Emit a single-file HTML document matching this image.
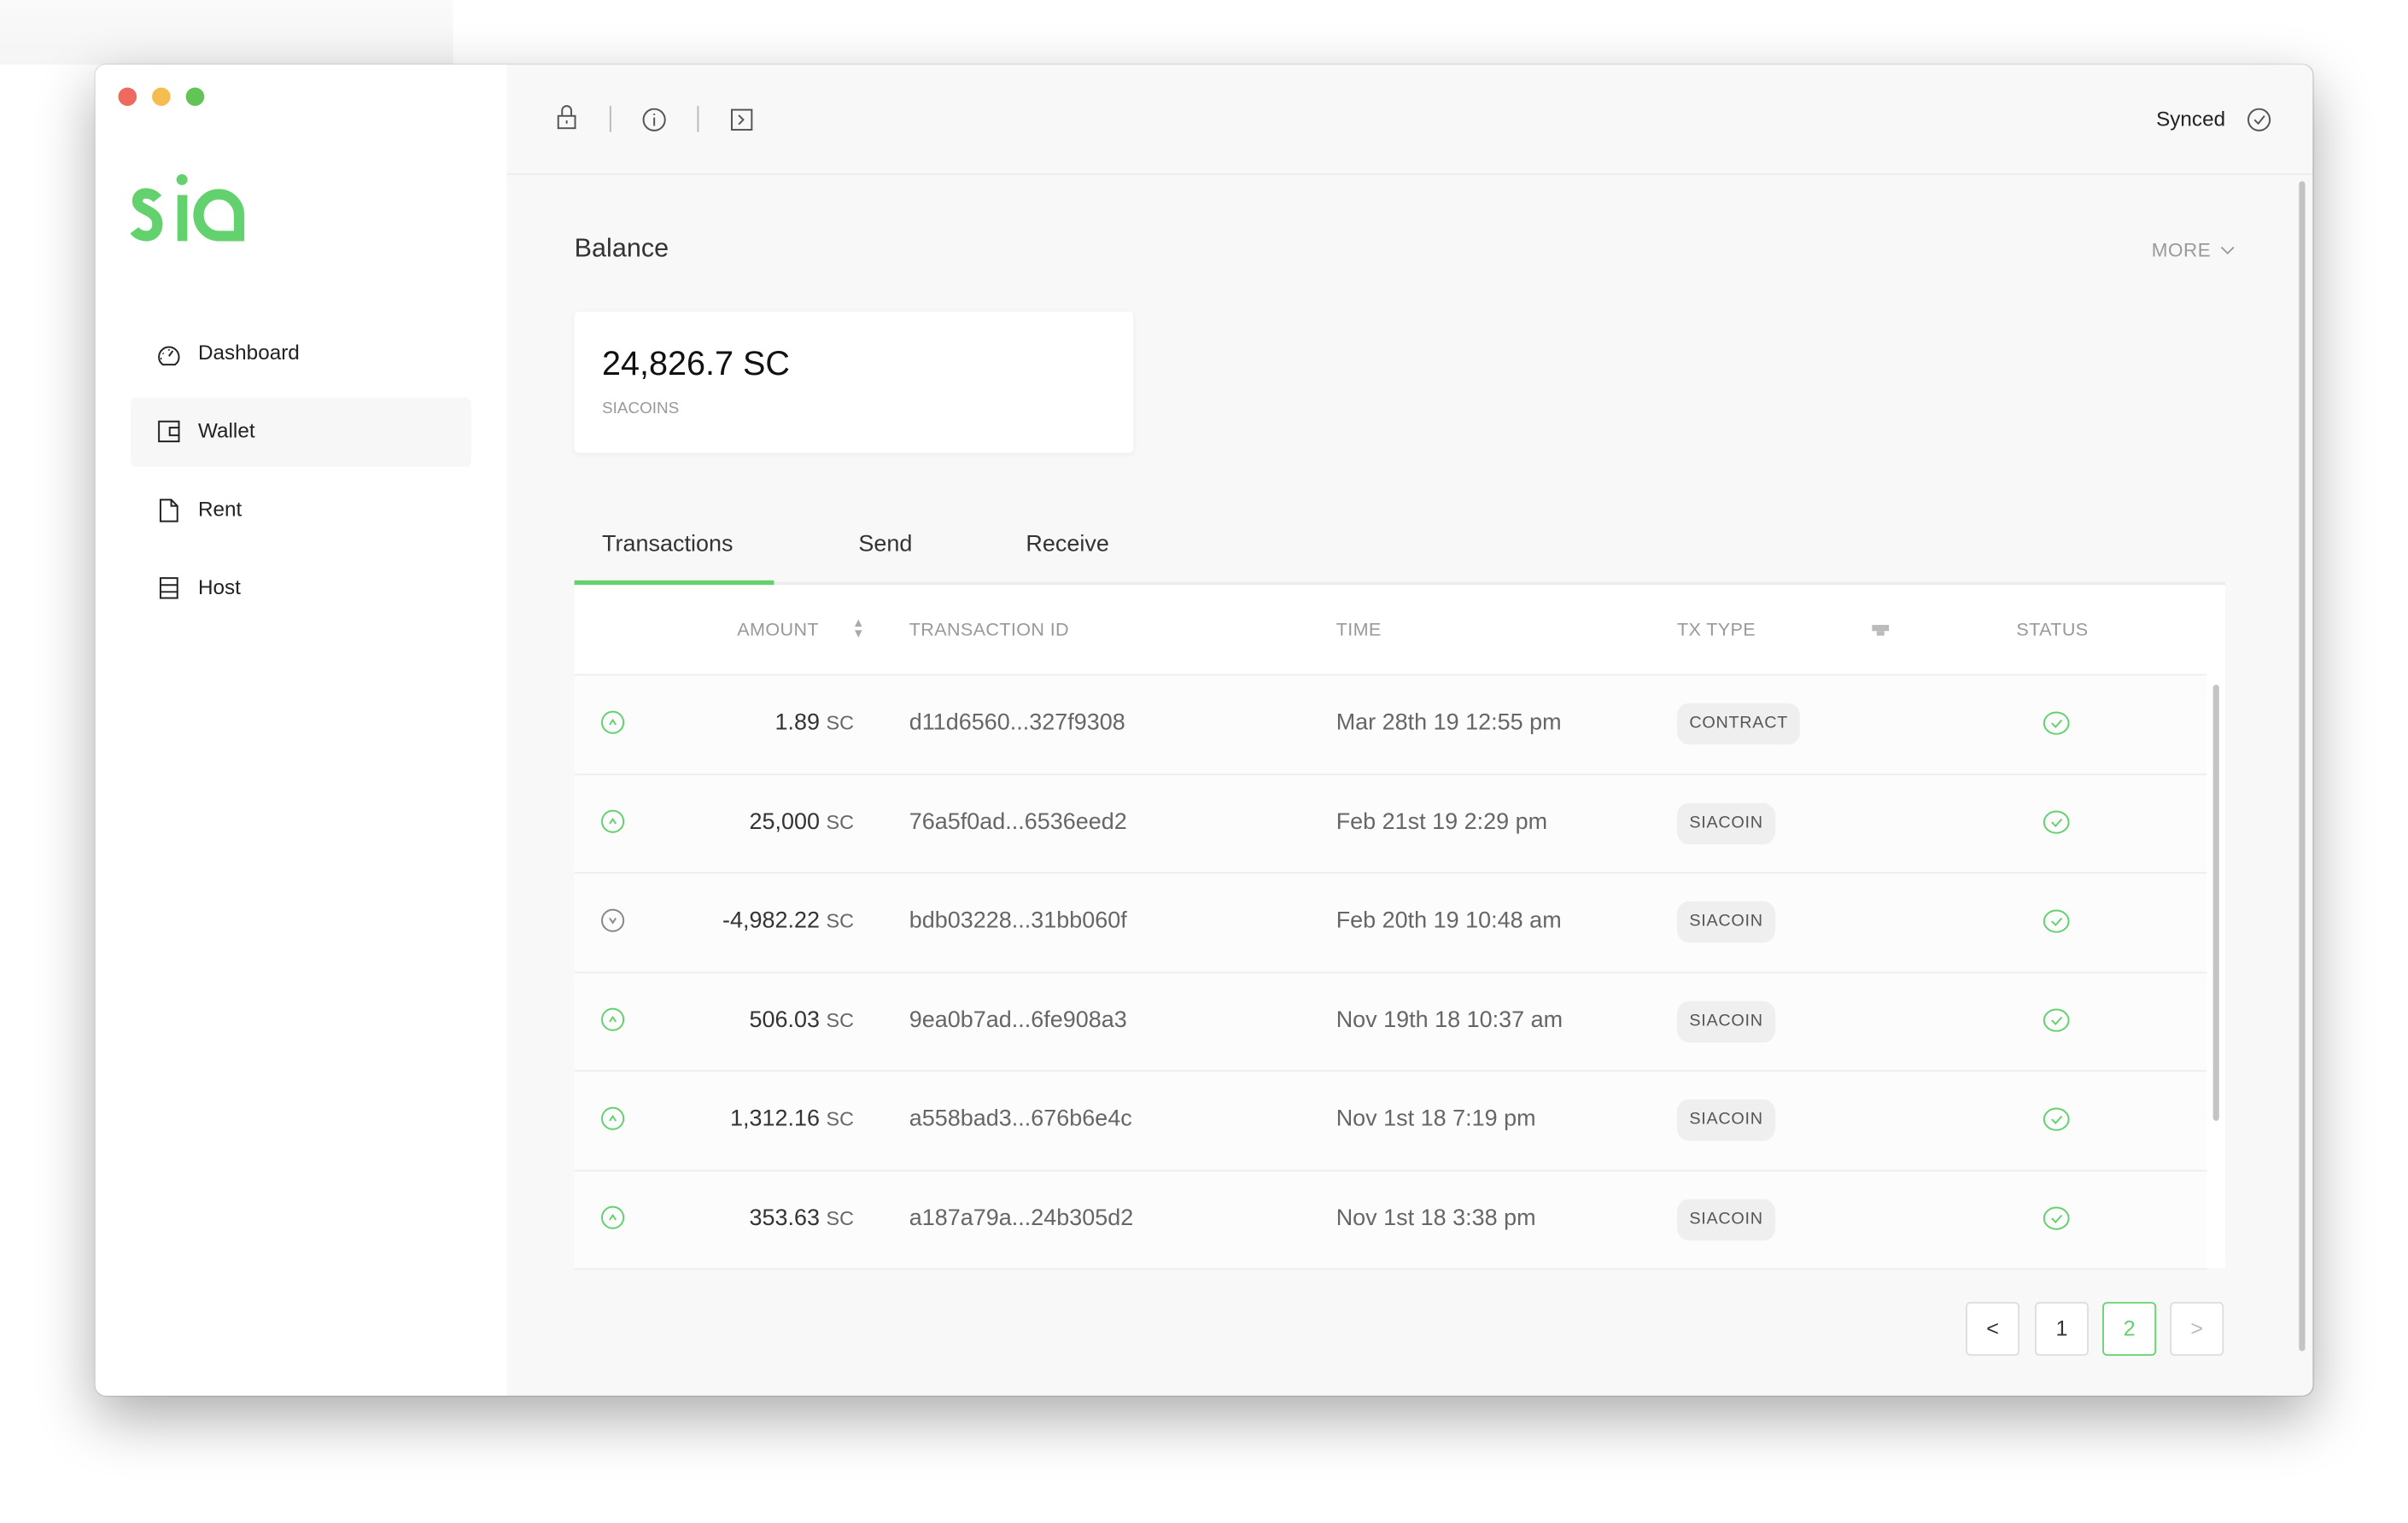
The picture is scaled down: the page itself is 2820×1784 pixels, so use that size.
<!DOCTYPE html>
<html><head><meta charset="utf-8"><style>
*{margin:0;padding:0;box-sizing:border-box}
html,body{width:2820px;height:1784px;overflow:hidden;background:#fff}
#s{position:absolute;left:0;top:0;width:1568px;height:992px;transform:scale(1.7985);transform-origin:0 0;font-family:"Liberation Sans",sans-serif;color:#222}
.a{position:absolute}
.win{left:62px;top:42px;width:1444px;height:867px;border-radius:7px;background:#f8f8f8;box-shadow:0 14px 38px rgba(0,0,0,.33),0 0 1px rgba(0,0,0,.4);overflow:hidden}
.side{left:0;top:0;width:268px;height:867px;background:#fff}
.dot{width:12px;height:12px;border-radius:50%;top:15px}
.nav{left:40px;font-size:13.5px;color:#222}
.th{font-size:12px;color:#999;top:361px;letter-spacing:.2px}
.row{left:312px;width:1063px;height:64.5px;border-bottom:1px solid #ececec;background:#fcfcfc}
.row div{position:absolute;top:22px;font-size:15px}
.amt{right:881px;color:#333;text-align:right;white-space:nowrap}
.amt small{font-size:13px;color:#666}
.id{left:218px;color:#666}
.tm{left:496px;color:#666}
.tag{left:718px;top:18px!important;height:27px;line-height:27px;padding:0 8px;background:#efefef;border-radius:8px;font-size:11px!important;color:#555;letter-spacing:.4px}
.pg{top:806px;width:35px;height:35px;border:1px solid #ddd;border-radius:3px;background:#fff;text-align:center;line-height:33px;font-size:14px;color:#333}
</style></head><body><div id="s">
<div class="a" style="left:0;top:0;width:295px;height:42px;background:linear-gradient(#fafafa,#f5f5f5)"></div>
<div class="a win">
 <div class="a side">
  <div class="a dot" style="left:15px;background:#ee6a5f"></div>
  <div class="a dot" style="left:37px;background:#f5bd4f"></div>
  <div class="a dot" style="left:59px;background:#61c454"></div>
  <div class="a" style="left:23px;top:217px;width:222px;height:45px;background:#f7f7f7;border-radius:4px"></div>
  <svg class="a" style="left:0;top:0" width="268" height="420" viewBox="62 42 268 420">
   <g fill="none" stroke="#63d26e" stroke-width="6.8">
    <path d="M102.5 129.5 C98.5 124.5 89.5 124.5 89.5 131 C89.5 137.5 102.5 136 102.5 146 C102.5 155.5 91.5 155.5 87.5 150"/>
    <path d="M155.7 153.7 H142.5 A13.2 13.6 0 1 1 155.7 140 Z"/>
   </g>
   <rect x="115.5" y="127" width="6.5" height="30" fill="#63d26e"/>
   <circle cx="118.5" cy="117" r="3.6" fill="#63d26e"/>
   <g fill="none" stroke="#222" stroke-width="1.1">
    <path d="M104.5 236 A6.5 6.5 0 1 1 115.5 236 L114 237.5 H106 Z"/><path d="M110 232 L112.5 228.5 M106 230 L106.5 230.5 M110 227.5 V228.3 M104.5 233.5 H105.3"/>
    <rect x="103.5" y="274.5" width="13" height="13"/><path d="M116.5 278.5 H110.5 V283.5 H116.5"/>
    <path d="M104.5 325.5 H111.5 L115.5 329.5 V339.5 H104.5 Z M111.5 325.5 V329.5 H115.5"/>
    <rect x="104.5" y="376.5" width="11" height="13"/><path d="M104.5 381 H115.5 M104.5 385.5 H115.5"/>
   </g>
  </svg>
  <div class="a nav" style="left:67px;top:180px">Dashboard</div>
  <div class="a nav" style="left:67px;top:231px">Wallet</div>
  <div class="a nav" style="left:67px;top:282px">Rent</div>
  <div class="a nav" style="left:67px;top:333px">Host</div>
 </div>
 <div class="a" style="left:268px;top:71px;width:1176px;height:1px;background:#ebebeb"></div>
 <svg class="a" style="left:268px;top:0" width="1176" height="100" viewBox="330 42 1176 100">
  <g fill="none" stroke="#555" stroke-width="1.1">
   <rect x="363.5" y="75.5" width="11" height="8"/><path d="M366 75.5 V72 A3 3 0 0 1 372 72 V75.5 M369 78.5 V80.5"/>
   <path d="M397.5 69 V86 M454.5 69 V86" stroke="#bbb"/>
   <circle cx="426" cy="78" r="7"/><path d="M426 76.5 V82 M426 74 V75"/>
   <rect x="476.5" y="71.5" width="13" height="13"/><path d="M481 75 L484 78 L481 81"/>
   <circle cx="1471" cy="78" r="7"/><path d="M1468 78 L1470.5 80.5 L1474.5 75.5"/>
  </g>
 </svg>
 <div class="a" style="left:1342px;top:28px;font-size:13.5px;color:#222">Synced</div>
 <div class="a" style="left:312px;top:110px;font-size:17px;color:#333">Balance</div>
 <div class="a" style="left:1339px;top:114px;font-size:12.5px;color:#999;letter-spacing:.3px">MORE</div>
 <svg class="a" style="left:1383px;top:116px" width="12" height="10"><path d="M1.5 3 L5.5 7 L9.5 3" fill="none" stroke="#999" stroke-width="1"/></svg>
 <div class="a" style="left:312px;top:161px;width:364px;height:92px;background:#fff;border-radius:3px;box-shadow:0 1px 4px rgba(0,0,0,.05)">
  <div class="a" style="left:18px;top:21px;font-size:22px;color:#111">24,826.7 SC</div>
  <div class="a" style="left:18px;top:57px;font-size:10.5px;color:#999">SIACOINS</div>
 </div>
 <div class="a" style="left:330px;top:304px;font-size:15px;color:#333">Transactions</div>
 <div class="a" style="left:497px;top:304px;font-size:15px;color:#333">Send</div>
 <div class="a" style="left:606px;top:304px;font-size:15px;color:#333">Receive</div>
 <div class="a" style="left:312px;top:337px;width:1075px;height:2px;background:#ececec"></div>
 <div class="a" style="left:312px;top:336px;width:130px;height:3px;background:#63d26e"></div>
 <div class="a" style="left:312px;top:339px;width:1075px;height:445px;background:#fff"></div>
 <div class="a th" style="left:418px">AMOUNT</div>
 <div class="a" style="left:493px;top:360px;font-size:8px;color:#aaa;line-height:7px">&#9650;<br>&#9660;</div>
 <div class="a th" style="left:530px">TRANSACTION ID</div>
 <div class="a th" style="left:808px">TIME</div>
 <div class="a th" style="left:1030px">TX TYPE</div>
 <div class="a" style="left:1157px;top:365px;width:11px;height:4px;background:#bbb"></div><div class="a" style="left:1160px;top:369px;width:5px;height:3px;background:#bbb"></div>
 <div class="a th" style="left:1251px">STATUS</div>
 <div class="a" style="left:312px;top:397px;width:1063px;height:1px;background:#ececec"></div>
 <div class="a" style="left:1379px;top:404px;width:4px;height:284px;background:#c4c4c4;border-radius:2px"></div>
 <div class="a" style="left:1435px;top:76px;width:4px;height:762px;background:#c4c4c4;border-radius:2px"></div>

 <div class="a row" style="top:398px"><div class="amt">1.89 <small>SC</small></div><div class="id">d11d6560...327f9308</div><div class="tm">Mar 28th 19 12:55 pm</div><div class="tag">CONTRACT</div></div>
 <div class="a row" style="top:462.5px"><div class="amt">25,000 <small>SC</small></div><div class="id">76a5f0ad...6536eed2</div><div class="tm">Feb 21st 19 2:29 pm</div><div class="tag">SIACOIN</div></div>
 <div class="a row" style="top:527px"><div class="amt">-4,982.22 <small>SC</small></div><div class="id">bdb03228...31bb060f</div><div class="tm">Feb 20th 19 10:48 am</div><div class="tag">SIACOIN</div></div>
 <div class="a row" style="top:591.5px"><div class="amt">506.03 <small>SC</small></div><div class="id">9ea0b7ad...6fe908a3</div><div class="tm">Nov 19th 18 10:37 am</div><div class="tag">SIACOIN</div></div>
 <div class="a row" style="top:656px"><div class="amt">1,312.16 <small>SC</small></div><div class="id">a558bad3...676b6e4c</div><div class="tm">Nov 1st 18 7:19 pm</div><div class="tag">SIACOIN</div></div>
 <div class="a row" style="top:720.5px"><div class="amt">353.63 <small>SC</small></div><div class="id">a187a79a...24b305d2</div><div class="tm">Nov 1st 18 3:38 pm</div><div class="tag">SIACOIN</div></div>

 <svg class="a" style="left:0;top:0" width="1444" height="867" viewBox="62 42 1444 867">
  <g fill="none" stroke-width="1.1">
   <g stroke="#63d26e">
    <circle cx="399" cy="470.5" r="7"/><path d="M397 472 L399 469 L401 472"/>
    <circle cx="399" cy="535" r="7"/><path d="M397 536.5 L399 533.5 L401 536.5"/>
    <circle cx="399" cy="664" r="7"/><path d="M397 665.5 L399 662.5 L401 665.5"/>
    <circle cx="399" cy="728.5" r="7"/><path d="M397 730 L399 727 L401 730"/>
    <circle cx="399" cy="793" r="7"/><path d="M397 794.5 L399 791.5 L401 794.5"/>
    <g id="c"><ellipse cx="1339" cy="471" rx="8" ry="7"/><path d="M1336 471 L1338.5 473.5 L1342.5 469"/></g>
    <use href="#c" y="64.5"/><use href="#c" y="129"/><use href="#c" y="193.5"/><use href="#c" y="258"/><use href="#c" y="322.5"/>
   </g>
   <g stroke="#888"><circle cx="399" cy="599.5" r="7"/><path d="M397 598 L399 601 L401 598"/></g>
  </g>
 </svg>
 <div class="a pg" style="left:1218px">&lt;</div>
 <div class="a pg" style="left:1263px">1</div>
 <div class="a pg" style="left:1307px;border-color:#63d26e;color:#63d26e">2</div>
 <div class="a pg" style="left:1351px;color:#bbb">&gt;</div>
</div>
</div></body></html>
